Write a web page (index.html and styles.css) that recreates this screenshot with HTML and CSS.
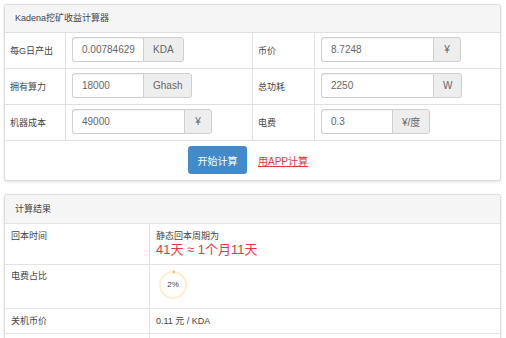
FILE: index.html
```html
<!DOCTYPE html>
<html lang="zh-CN">
<head>
<meta charset="utf-8">
<title>Kadena挖矿收益计算器</title>
<link rel="stylesheet" href="styles.css">
</head>
<body>
<div class="page">
  <section class="panel">
    <div class="panel-head">Kadena挖矿收益计算器</div>
    <div class="form-grid">
      <div class="cell label">每G日产出</div>
      <div class="cell field sep">
        <div class="ig"><input class="ctl narrow" value="0.00784629"><span class="addon">KDA</span></div>
      </div>
      <div class="cell label sep">币价</div>
      <div class="cell field sep">
        <div class="ig"><input class="ctl wide" value="8.7248"><span class="addon">¥</span></div>
      </div>

      <div class="cell label">拥有算力</div>
      <div class="cell field sep">
        <div class="ig"><input class="ctl narrow" value="18000"><span class="addon">Ghash</span></div>
      </div>
      <div class="cell label sep">总功耗</div>
      <div class="cell field sep">
        <div class="ig"><input class="ctl wide" value="2250"><span class="addon">W</span></div>
      </div>

      <div class="cell label">机器成本</div>
      <div class="cell field sep">
        <div class="ig"><input class="ctl wide" value="49000"><span class="addon">¥</span></div>
      </div>
      <div class="cell label sep">电费</div>
      <div class="cell field sep">
        <div class="ig"><input class="ctl narrow" value="0.3"><span class="addon">¥/度</span></div>
      </div>
    </div>
    <div class="actions">
      <button class="btn" type="button">开始计算</button>
      <a class="app-link" href="#">用APP计算</a>
    </div>
  </section>

  <section class="panel result">
    <div class="panel-head head-tall">计算结果</div>
    <div class="res-grid">
      <div class="rcell">回本时间</div>
      <div class="rcell sep">
        <div class="sub">静态回本周期为</div>
        <div class="big">41天 ≈ 1个月11天</div>
      </div>

      <div class="rcell pie-row">电费占比</div>
      <div class="rcell sep pie-row">
        <div class="pie">
          <svg width="30" height="30" viewBox="0 0 30 30">
            <circle cx="15" cy="15" r="13" fill="none" stroke="#fbf0d4" stroke-width="2"/>
            <path d="M15 2 A13 13 0 0 1 16.6 2.1" fill="none" stroke="#e9bd3c" stroke-width="3"/>
          </svg>
          <span class="pie-text">2%</span>
        </div>
      </div>

      <div class="rcell">关机币价</div>
      <div class="rcell sep">0.11 元 / KDA</div>

      <div class="rcell tall"></div>
      <div class="rcell sep tall"></div>
    </div>
  </section>
</div>
</body>
</html>
```

FILE: styles.css
```css
* { box-sizing: border-box; }

html, body {
  margin: 0;
  padding: 0;
  background: #fff;
}

body {
  font-family: "Liberation Sans", "Noto Sans CJK SC", sans-serif;
  color: #333;
  font-size: 10px;
}

.page {
  padding: 4px 5px 0 4px;
}

.panel {
  border: 1px solid #dcdcdc;
  border-radius: 3px;
  background: #fff;
  box-shadow: 0 1px 3px rgba(0, 0, 0, 0.12);
}

.result {
  margin-top: 13px;
}

.panel-head {
  height: 27px;
  line-height: 27px;
  padding-left: 10px;
  background: #f5f5f5;
  font-size: 9px;
  color: #444;
  border-radius: 3px 3px 0 0;
}

.head-tall {
  height: 28px;
  line-height: 28px;
}

.form-grid {
  display: grid;
  grid-template-columns: 60px 187px 62px 1fr;
}

.cell {
  border-top: 1px solid #dfdfdf;
  display: flex;
  align-items: center;
  height: 36px;
}

.sep {
  border-left: 1px solid #dfdfdf;
}

.label {
  padding-left: 5px;
  font-size: 9px;
  color: #444;
}

.field {
  padding: 4px 6px 6px 6px;
  align-items: flex-start;
}

.ig {
  display: flex;
  height: 25px;
}

.ctl {
  height: 25px;
  margin: 0;
  padding: 0 2px 0 9px;
  border: 1px solid #cfcfcf;
  border-right: 0;
  border-radius: 3px 0 0 3px;
  box-shadow: inset 0 1px 1px rgba(0, 0, 0, 0.06);
  font-family: "Liberation Sans", "Noto Sans CJK SC", sans-serif;
  font-size: 10px;
  color: #666;
  background: #fff;
  outline: none;
}

.narrow { width: 71px; }
.wide { width: 112px; }

.addon {
  display: flex;
  align-items: center;
  justify-content: center;
  min-width: 28px;
  padding: 0 9px;
  border: 1px solid #cfcfcf;
  border-radius: 0 3px 3px 0;
  background: #eee;
  color: #666;
  font-size: 10px;
}

.actions {
  border-top: 1px solid #dfdfdf;
  display: flex;
  justify-content: center;
  align-items: center;
  gap: 11px;
  padding: 5px 9px 6px 0;
}

.btn {
  width: 59px;
  height: 28px;
  border: 0;
  border-radius: 3px;
  background: #428bca;
  color: #fff;
  font-family: "Liberation Sans", "Noto Sans CJK SC", sans-serif;
  font-size: 10px;
  padding: 0;
}

.app-link {
  color: #e2363b;
  font-size: 10px;
  text-decoration: underline;
}

.res-grid {
  display: grid;
  grid-template-columns: 144px 1fr;
}

.rcell {
  border-top: 1px solid #e3e3e3;
  padding: 6px;
  font-size: 9px;
  line-height: 12px;
  color: #444;
}

.sub {
  font-size: 9px;
  line-height: 12px;
}

.big {
  font-size: 13px;
  line-height: 16px;
  color: #e8353b;
}

.pie-row {
  padding-top: 5px;
  padding-bottom: 8px;
}

.pie {
  position: relative;
  width: 30px;
  height: 30px;
  margin-left: 2px;
}

.pie svg {
  display: block;
}

.pie-text {
  position: absolute;
  left: 0;
  top: 0;
  width: 30px;
  line-height: 30px;
  text-align: center;
  font-size: 8px;
  color: #444;
}

.tall {
  height: 30px;
}
```
